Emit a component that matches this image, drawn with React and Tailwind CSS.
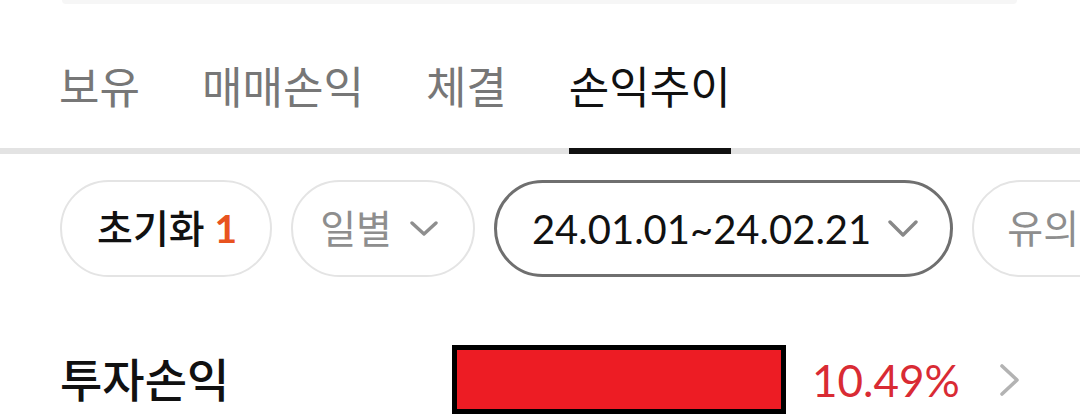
const tabs = ['보유', '매매손익', '체결', '손익추이'];

function Chip({ children, active }) {
  return (
    <div
      className={`shrink-0 h-[97px] rounded-full flex items-center whitespace-nowrap ${
        active ? 'border-[3px] border-[#6f6f6f]' : 'border-[2px] border-[#e4e4e4]'
      }`}
    >
      {children}
    </div>
  );
}

function DownArrow({ w, className }) {
  const h = Math.round(w * 0.55);
  return (
    <svg width={w} height={h} viewBox={`0 0 ${w} ${h}`} className={className} fill="none">
      <path
        d={`M2 2 L${w / 2} ${h - 2} L${w - 2} 2`}
        stroke="currentColor"
        strokeWidth="3.4"
        strokeLinecap="round"
        strokeLinejoin="round"
      />
    </svg>
  );
}

export default function App() {
  return (
    <div className="w-[1080px] h-[419px] overflow-hidden bg-white font-['Lato','Noto_Sans_CJK_KR',sans-serif]">
      {/* search bar edge */}
      <div className="ml-[62px] mr-[63px] h-[4px] rounded-b-[14px] bg-[#f6f6f6]" />

      {/* Tabs */}
      <div className="flex gap-[62px] pl-[59px] h-[150px] border-b-[6px] border-[#e3e3e3]">
        {tabs.map((t, i) => (
          <div
            key={t}
            className={`-mb-[6px] flex items-center pt-[22px] text-[44px] leading-none border-b-[6px] ${
              i === 3 ? 'text-[#111] border-[#111]' : 'text-[#777] border-transparent'
            }`}
          >
            {t}
          </div>
        ))}
      </div>

      {/* Filter chips */}
      <div className="flex gap-[19px] pl-[60px] mt-[26px]">
        <Chip>
          <span className="pl-[35px] pr-[33px] text-[39px] font-medium text-[#111]">
            초기화 <span className="font-bold text-[#e8531f]">1</span>
          </span>
        </Chip>
        <Chip>
          <span className="pl-[27px] text-[39px] text-[#8e8e8e]">일별</span>
          <DownArrow w={28} className="ml-[18px] mr-[35px] text-[#8e8e8e]" />
        </Chip>
        <Chip active>
          <span className="pl-[35px] text-[40px] text-[#111]">24.01.01~24.02.21</span>
          <DownArrow w={30} className="ml-[17px] mr-[32px] text-[#888]" />
        </Chip>
        <Chip>
          <span className="pl-[33px] pr-[36px] text-[39px] text-[#8e8e8e]">유의사항</span>
        </Chip>
      </div>

      {/* Investment P&L row */}
      <div className="flex items-center pl-[60px] mt-[68px]">
        <div className="w-[392px] text-[46px] font-medium text-[#111] leading-none">투자손익</div>
        <div className="w-[334px] h-[69px] border-[5px] border-black bg-[#ed1c24]" />
        <div className="ml-[26px] text-[44px] text-[#d92b34] leading-none">10.49%</div>
        <svg width="22" height="34" viewBox="0 0 22 34" className="ml-[39px] text-[#b3b3b3]" fill="none">
          <path d="M3 3 L18 17 L3 31" stroke="currentColor" strokeWidth="3.6" strokeLinecap="round" strokeLinejoin="round" />
        </svg>
      </div>
    </div>
  );
}
